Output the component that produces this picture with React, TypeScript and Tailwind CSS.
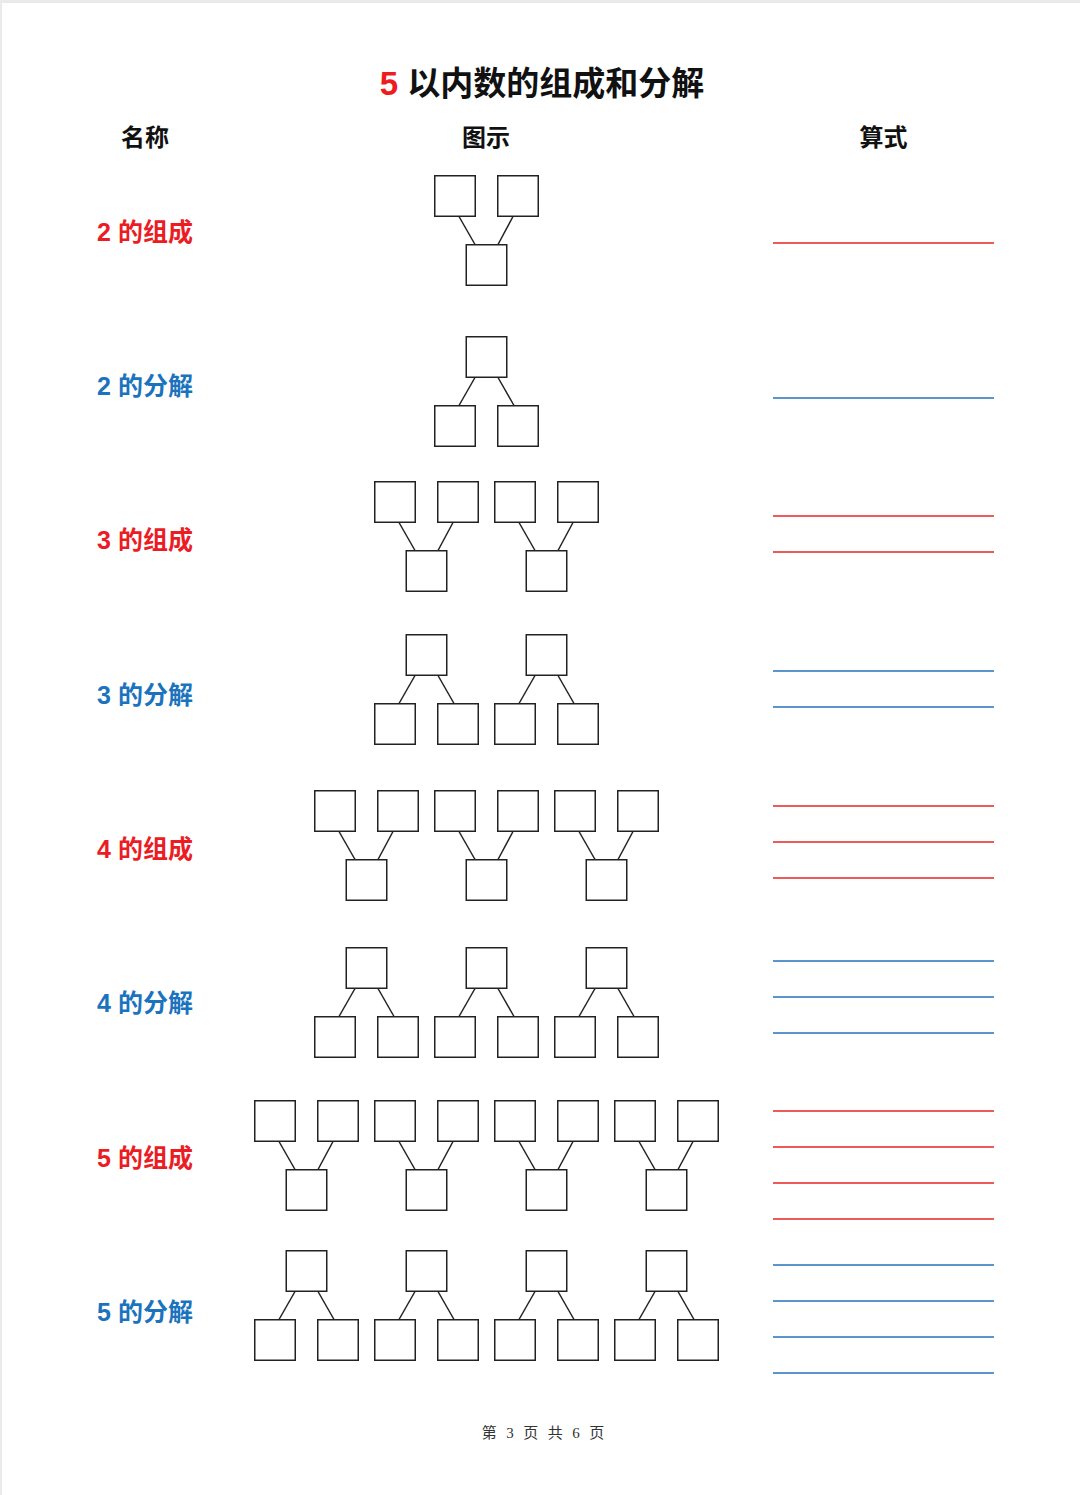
import React from "react";

type Kind = "compose" | "split";

interface RowData {
  label: string;
  num: number;
  kind: Kind;
  units: number;
  height: number;
  diagTop: number;
  lineTop: number;
  lines: number;
}

// offsets measured inside each row (whole pixels so thin lines stay crisp)
const rows: RowData[] = [
  { label: "的组成", num: 2, kind: "compose", units: 1, height: 154, diagTop: 20, lineTop: 87, lines: 1 },
  { label: "的分解", num: 2, kind: "split", units: 1, height: 154, diagTop: 27, lineTop: 88, lines: 1 },
  { label: "的组成", num: 3, kind: "compose", units: 2, height: 155, diagTop: 18, lineTop: 52, lines: 2 },
  { label: "的分解", num: 3, kind: "split", units: 2, height: 154, diagTop: 16, lineTop: 52, lines: 2 },
  { label: "的组成", num: 4, kind: "compose", units: 3, height: 154, diagTop: 18, lineTop: 33, lines: 3 },
  { label: "的分解", num: 4, kind: "split", units: 3, height: 155, diagTop: 21, lineTop: 34, lines: 3 },
  { label: "的组成", num: 5, kind: "compose", units: 4, height: 154, diagTop: 19, lineTop: 29, lines: 4 },
  { label: "的分解", num: 5, kind: "split", units: 4, height: 154, diagTop: 15, lineTop: 29, lines: 4 },
];

const Unit = ({ kind }: { kind: Kind }) => (
  <svg width="105" height="111" viewBox="0 0 105 111" className="block shrink-0">
    <g fill="#fff" stroke="#222" strokeWidth="1.5">
      {kind === "compose" ? (
        <>
          <rect x="0.75" y="0.75" width="40.5" height="40.5" />
          <rect x="63.75" y="0.75" width="40.5" height="40.5" />
          <rect x="32.25" y="69.75" width="40.5" height="40.5" />
          <line x1="25" y1="41.5" x2="41" y2="69.5" />
          <line x1="79" y1="41.5" x2="64" y2="69.5" />
        </>
      ) : (
        <>
          <rect x="32.25" y="0.75" width="40.5" height="40.5" />
          <rect x="0.75" y="69.75" width="40.5" height="40.5" />
          <rect x="63.75" y="69.75" width="40.5" height="40.5" />
          <line x1="41" y1="41.5" x2="25" y2="69.5" />
          <line x1="64" y1="41.5" x2="80" y2="69.5" />
        </>
      )}
    </g>
  </svg>
);

const Row = ({ row }: { row: RowData }) => {
  const red = row.kind === "compose";
  return (
    <div className="grid grid-cols-[286px_396px_1fr]" style={{ height: row.height }}>
      {/* name */}
      <div className="flex items-center justify-center">
        <span
          className={`text-[25px] font-bold leading-none ${
            red ? "text-[#ec1c24]" : "text-[#1c73bd]"
          }`}
        >
          {row.num} {row.label}
        </span>
      </div>

      {/* diagram */}
      <div className="flex justify-center items-start" style={{ paddingTop: row.diagTop }}>
        <div className="flex gap-[15px] shrink-0">
          {Array.from({ length: row.units }).map((_, i) => (
            <Unit key={i} kind={row.kind} />
          ))}
        </div>
      </div>

      {/* formula lines */}
      <div className="pl-[89px]" style={{ paddingTop: row.lineTop }}>
        <div className="flex flex-col gap-[34px] w-[221px]">
          {Array.from({ length: row.lines }).map((_, i) => (
            <div
              key={i}
              className={`h-[2px] ${red ? "bg-[#ec5a5a]" : "bg-[#5b95cc]"}`}
            />
          ))}
        </div>
      </div>
    </div>
  );
};

export default function App() {
  return (
    <div className="w-[1080px] min-h-[1495px] bg-white border-t-[3px] border-l-[2px] border-[#eaeaea] font-['Liberation_Sans','Noto_Sans_CJK_SC',sans-serif] text-[#111]">
      {/* title */}
      <h1 className="pt-[61px] pl-[2px] text-center text-[33px] leading-[40px] font-bold">
        <span className="text-[#ee1c1c]">5</span> 以内数的组成和分解
      </h1>

      {/* column headers */}
      <div className="grid grid-cols-[286px_396px_1fr] mt-[18px] text-[24px] leading-[32px] font-bold">
        <div className="text-center">名称</div>
        <div className="text-center">图示</div>
        <div className="pl-[89px]">
          <div className="w-[221px] text-center">算式</div>
        </div>
      </div>

      <div className="mt-[1px]">
        {rows.map((row, i) => (
          <Row key={i} row={row} />
        ))}
      </div>

      {/* footer */}
      <div className="mt-[34px] pl-[4px] flex justify-center gap-[9.5px] text-[15px] leading-[20px] text-[#333] font-['Liberation_Serif','Noto_Sans_CJK_SC',serif]">
        <span>第</span>
        <span>3</span>
        <span>页</span>
        <span>共</span>
        <span>6</span>
        <span>页</span>
      </div>
    </div>
  );
}
